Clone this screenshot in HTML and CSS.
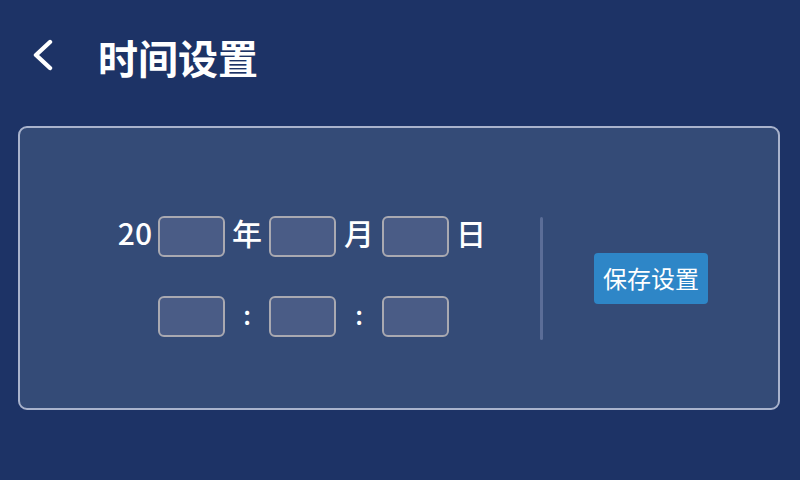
FILE: index.html
```html
<!DOCTYPE html>
<html lang="zh">
<head>
<meta charset="utf-8">
<link rel="stylesheet" href="styles.css">
</head>
<body>
<header class="topbar">
  <span class="back">
    <svg width="24" height="34" viewBox="0 0 24 34"><path d="M19 3 L5 16 L19 29" fill="none" stroke="#fff" stroke-width="4.4" stroke-linecap="round" stroke-linejoin="round"/></svg>
  </span>
  <h1 class="title">时间设置</h1>
</header>
<section class="card">
  <div class="fields">
    <span class="lbl lead">20</span>
    <span class="box"></span>
    <span class="lbl">年</span>
    <span class="box"></span>
    <span class="lbl">月</span>
    <span class="box"></span>
    <span class="lbl">日</span>

    <span class="lbl lead"></span>
    <span class="box"></span>
    <span class="lbl colon">:</span>
    <span class="box"></span>
    <span class="lbl colon">:</span>
    <span class="box"></span>
    <span class="lbl"></span>
  </div>
  <div class="divider"></div>
  <button class="save">保存设置</button>
</section>
</body>
</html>
```
FILE: styles.css
```css
html, body {
  margin: 0;
  padding: 0;
}
body {
  width: 800px;
  height: 480px;
  background: #1d3366;
  font-family: "Noto Sans CJK SC", "Noto Sans", sans-serif;
  color: #fff;
  overflow: hidden;
}
.topbar {
  height: 114px;
  display: flex;
  align-items: center;
}
.back {
  display: flex;
  margin-left: 31px;
  width: 24px;
  height: 34px;
  margin-top: -2px;
}
.title {
  margin: 0 0 0 43px;
  font-size: 40px;
  font-weight: 700;
  line-height: 1;
  letter-spacing: 0;
}
.card {
  margin: 12px 20px 0 18px;
  border: 2px solid #a9b3cc;
  border-radius: 9px;
  background: #344b77;
  display: flex;
  align-items: center;
  padding-top: 20px;
  box-sizing: border-box;
  height: 284px;
}
.fields {
  margin-left: 91px;
  margin-bottom: 4px;
  display: grid;
  grid-template-columns: 47px 67px 44px 67px 46px 67px 44px;
  grid-auto-rows: 41px;
  row-gap: 39px;
  align-items: center;
}
.lbl {
  font-size: 30px;
  font-weight: 500;
  text-align: center;
  line-height: 1;
  padding-bottom: 8px;
}
.lbl.lead {
  text-align: right;
  padding-right: 6px;
}
.colon {
  font-size: 26px;
  padding-bottom: 4px;
}
.box {
  height: 41px;
  box-sizing: border-box;
  border: 2px solid #a9a9b1;
  border-radius: 6px;
  background: #4a5c86;
}
.divider {
  margin-left: 47px;
  width: 3px;
  height: 123px;
  border-radius: 2px;
  background: #5b6d97;
}
.save {
  margin-left: 51px;
  width: 114px;
  height: 51px;
  border: none;
  border-radius: 4px;
  background: #2e86c7;
  color: #fff;
  font-family: "Noto Sans CJK SC", "Noto Sans", sans-serif;
  font-size: 24px;
  font-weight: 400;
  padding: 0;
  line-height: 1;
}
```
